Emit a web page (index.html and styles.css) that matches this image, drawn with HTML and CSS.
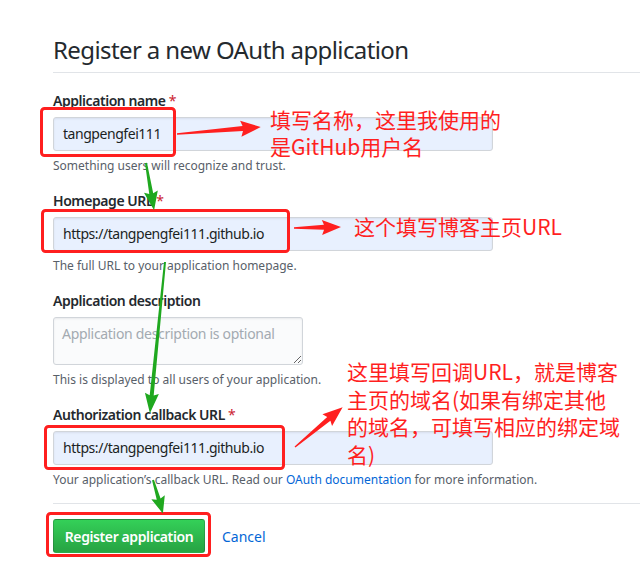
FILE: index.html
```html
<!DOCTYPE html>
<html lang="zh">
<head>
<meta charset="utf-8">
<link rel="stylesheet" href="styles.css">
</head>
<body>
<div class="page">
  <h1 class="title">Register a new OAuth application</h1>
  <form class="form">
    <div class="group">
      <label class="label">Application name <span class="req">*</span></label>
      <div class="input">tangpengfei111</div>
      <p class="hint">Something users will recognize and trust.</p>
    </div>
    <div class="group">
      <label class="label">Homepage URL <span class="req">*</span></label>
      <div class="input">https://tangpengfei111.github.io</div>
      <p class="hint">The full URL to your application homepage.</p>
    </div>
    <div class="group">
      <label class="label">Application description</label>
      <textarea class="textarea" placeholder="Application description is optional"></textarea>
      <p class="hint">This is displayed to all users of your application.</p>
    </div>
    <div class="group">
      <label class="label">Authorization callback URL <span class="req">*</span></label>
      <div class="input">https://tangpengfei111.github.io</div>
      <p class="hint">Your application’s callback URL. Read our <a class="link" href="#">OAuth documentation</a> for more information.</p>
    </div>
    <div class="actions">
      <button type="button" class="btn">Register application</button>
      <a class="cancel" href="#">Cancel</a>
    </div>
  </form>
</div>

<div class="note note1">填写名称，这里我使用的<br>是GitHub用户名</div>
<div class="note note2">这个填写博客主页URL</div>
<div class="note note3">这里填写回调URL，就是博客<br>主页的域名(如果有绑定其他<br>的域名，可填写相应的绑定域<br>名)</div>

<svg class="marks" width="640" height="569" viewBox="0 0 640 569">
  <g fill="none" stroke="#ff1f1f" stroke-width="3">
    <rect x="41.5" y="108.5" width="133" height="47" rx="3"/>
    <rect x="42.5" y="210.5" width="246" height="41" rx="3"/>
    <rect x="45.5" y="426.5" width="238" height="42" rx="3"/>
    <rect x="47.5" y="513.5" width="162" height="42" rx="3"/>
  </g>
  <g fill="#ff1f1f">
    <polygon transform="translate(177 134) rotate(-4.76)" points="0,-0.7 66,-2.5 64,-8 84,0 64,8 66,2.5 0,0.7"/>
    <polygon transform="translate(294 228) rotate(-1.2)" points="0,-0.7 30,-2.5 28,-7.5 47,0 28,7.5 30,2.5 0,0.7"/>
    <polygon transform="translate(295 447) rotate(-39.8)" points="0,-0.7 44,-2.5 42,-7.5 62,0 42,7.5 44,2.5 0,0.7"/>
  </g>
  <g fill="#1fa81f">
    <polygon transform="translate(146 163) rotate(80.3)" points="0,-1 31,-2 29,-7 48,0 29,7 31,2 0,1"/>
    <polygon transform="translate(165 262) rotate(95.7)" points="0,-1 134,-2 132,-7 152,0 132,7 134,2 0,1"/>
    <polygon transform="translate(153 480) rotate(73.6)" points="0,-1 20,-2 18,-7 35,0 18,7 20,2 0,1"/>
  </g>
</svg>
</body>
</html>
```

FILE: styles.css
```css
* { box-sizing: border-box; }
html, body { margin: 0; padding: 0; background: #fff; }
body {
  width: 640px;
  height: 569px;
  overflow: hidden;
  position: relative;
  font-family: "Noto Sans", "Open Sans", sans-serif;
  color: #24292e;
}
.page {
  padding: 34px 0 0 53px;
}
.title {
  margin: 0;
  font-size: 24px;
  font-weight: 400;
  letter-spacing: -0.6px;
  line-height: 32px;
  padding-bottom: 6px;
  border-bottom: 1px solid #e1e4e8;
}
.form { display: flex; flex-direction: column; }
.group {
  display: flex;
  flex-direction: column;
  align-items: flex-start;
  margin-top: 16px;
}
.group:first-child { margin-top: 18px; }
.label {
  font-size: 14px;
  font-weight: 600;
  letter-spacing: -0.45px;
  line-height: 20px;
  margin-bottom: 6px;
}
.req { color: #cb2431; font-weight: 400; }
.input {
  width: 440px;
  height: 34px;
  padding: 0 9px;
  font-size: 14px;
  letter-spacing: -0.45px;
  line-height: 32px;
  color: #1b1f23;
  background: #e8f0fe;
  border: 1px solid #d1d5da;
  border-radius: 3px;
  box-shadow: inset 0 1px 2px rgba(27,31,35,.075);
}
.textarea {
  width: 250px;
  height: 48px;
  padding: 6px 8px;
  font-family: inherit;
  font-size: 14px;
  letter-spacing: -0.3px;
  line-height: 20px;
  background: #fafbfc;
  border: 1px solid #d1d5da;
  border-radius: 3px;
  box-shadow: inset 0 1px 2px rgba(27,31,35,.075);
  margin: 0;
  display: block;
}
.textarea::placeholder { color: #a3aab1; }
.hint {
  margin: 6px 0 0;
  font-size: 12px;
  line-height: 18px;
  color: #586069;
}
.link { color: #0366d6; text-decoration: none; }
.actions {
  margin-top: 14px;
  padding-top: 15px;
  border-top: 1px solid #e1e4e8;
  display: flex;
  align-items: center;
}
.btn {
  height: 34px;
  width: 152px;
  padding: 0;
  white-space: nowrap;
  font-family: inherit;
  font-size: 14px;
  font-weight: 600;
  letter-spacing: -0.4px;
  color: #fff;
  background: linear-gradient(#34d058, #28a745 90%);
  border: 1px solid rgba(27,31,35,.2);
  border-radius: 3px;
}
.cancel {
  margin-left: 17px;
  font-size: 14px;
  color: #0366d6;
  text-decoration: none;
}
.note {
  position: absolute;
  font-family: "Noto Sans CJK SC", "Noto Sans", sans-serif;
  font-size: 21px;
  line-height: 27px;
  color: #ff1f1f;
  white-space: nowrap;
}
.note1 { left: 270px; top: 106px; }
.note2 { left: 354px; top: 213px; }
.note3 { left: 347px; top: 358px; line-height: 27.5px; }
.marks {
  position: absolute;
  left: 0;
  top: 0;
  pointer-events: none;
}
```
